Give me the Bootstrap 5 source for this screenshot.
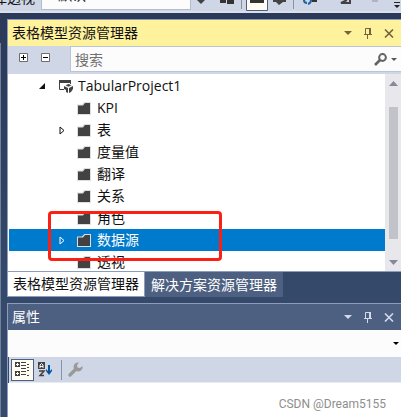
<!DOCTYPE html>
<html lang="zh-CN">
<head>
<meta charset="utf-8">
<meta name="viewport" content="width=device-width, initial-scale=1">
<title>表格模型资源管理器</title>
<link href="https://cdn.jsdelivr.net/npm/bootstrap@5.3.0/dist/css/bootstrap.min.css" rel="stylesheet">
<style>
  body { font: 14px/22px "Open Sans", "Noto Sans CJK SC", sans-serif; color: #111; background: linear-gradient(#2a3957 0, #2f4262 180px, #354a6b 300px); }
  button { color: inherit; background: none; border: 0; padding: 0; line-height: 1; }
  svg { display: block; flex: none; }
  .strip { height: 13px; background: #cfd6e5; border-bottom: 2px solid #dce0ec; }
  .strip-row { height: 32px; margin-top: -19px; }
  .strip-label { width: 41px; padding: 0 6px 4px 0; }
  .strip-select { width: 150px; height: 30px; margin-bottom: 3px; padding: 0 8px; font-size: 14px; line-height: 28px; color: #111; background: #fcfcfc; border: 1px solid #b4bdcc; border-radius: 0; appearance: none; }
  .dock { min-height: 100vh; }
  .docked { padding-top: 6px; }
  .edge { width: 7px; border-left: 1px solid #71809b; margin-top: 24px; }
  .pane { border: solid #8e9bbc; border-width: 1px 0 1px 1px; }
  .pane-title { height: 26px; padding: 0 7px 0 4px; }
  .pane-title h2 { font-size: 14px; line-height: 22px; font-weight: 400; }
  .tools { gap: 12px; }
  .active-title { background: #fff29d; }
  .active-title .tools { color: #75633d; }
  .quiet-title { background: #4d6082; color: #fff; }
  .quiet-title .tools { color: #d3daea; }
  .finder { height: 28px; background: #cfd6e5; padding-bottom: 2px; }
  .finder-btns { width: 62px; padding: 0 20px 3px 11px; }
  .finder-box { border: solid #b9c4d6; border-width: 1px 0 1px 1px; background: #fcfcfc; }
  .finder-box input { height: 24px; padding: 1px 4px; font-size: 14px; min-width: 0; outline: 0; }
  .finder-box input::placeholder { color: #717171; opacity: 1; }
  .tree { height: 197px; padding-top: 1px; background: #fff; }
  .tree-row { height: 22px; margin-left: 1px; white-space: nowrap; }
  .twisty { width: 14px; height: 22px; }
  .root { padding-left: 26px; }
  .leaf { padding-left: 46px; }
  .leaf-icon { margin: 0 6px 0 8px; }
  .picked { background: #007acc; color: #fff; }
  .scroller { width: 16px; background: #e8e8ec; padding: 7px 3px 6px 4px; }
  .thumb { background: #c2c3c9; margin: 21px 0; }
  .callout { left: 40px; top: 137px; width: 174px; height: 50px; border: 3px solid #fb2014; border-radius: 4px; pointer-events: none; }
  .tab-a, .tab-b { height: 25px; font-size: 14px; line-height: 22px; white-space: nowrap; }
  .tab-a { background: #fff; color: #111; padding: 0 5px 1px; border: solid #8e9bbc; border-width: 0 1px 1px; }
  .tab-b { background: #4d6082; color: #fff; padding: 2px 6px 1px; }
  .tabs { margin-bottom: 6px; }
  .object-bar { height: 27px; background: #fcfcfc; }
  .object-bar select { height: 27px; appearance: none; border: 0; background: transparent; }
  .caret { right: 2px; top: 12px; }
  .prop-tools { height: 26px; margin-left: 1px; padding: 0 2px; background: #cfd6e5; border-bottom: 1px solid #e8ebf2; }
  .tool-on { width: 23px; height: 22px; border: 1px solid #4d6082; background: #fffcf4; }
  .tool-rule { width: 1px; height: 20px; background: #8591a8; margin: 0 6px 0 8px; }
  .props { background: #fff; padding: 0 15px 3px; }
  .byline { font: 12px/20px Roboto, sans-serif; color: #8e8e8e; }
</style>
</head>
<body>
<svg class="d-none" aria-hidden="true">
  <symbol id="folder" viewBox="0 0 14 13"><path d="M0 2.5h5L7.2 0H14v13H0z" fill="#dedede"/><path d="M1 3.5h5L8 1h5v11H1z" fill="#424242"/></symbol>
  <symbol id="down" viewBox="0 0 8 4"><path d="M0 0h8L4 4z" fill="currentColor"/></symbol>
  <symbol id="pin" viewBox="0 0 8 12"><path d="M1.500 7V1.500h4V7" fill="none" stroke="currentColor"/><path d="M5 1h2v6H5zM0 7h8v1H0zM3 8h1v4H3z" fill="currentColor"/></symbol>
  <symbol id="cross" viewBox="0 0 10 9"><path d="M1 .5l8 8M9 .5l-8 8" fill="none" stroke="currentColor" stroke-width="1.6"/></symbol>
  <symbol id="closed" viewBox="0 0 6 9"><path d="M1 1l4 3.5L1 8z" fill="none" stroke="currentColor"/></symbol>
</svg>

<div class="dock d-flex flex-column">
  <div class="strip overflow-hidden">
    <div class="strip-row d-flex align-items-end">
      <label for="persp" class="strip-label flex-shrink-0 overflow-hidden text-nowrap d-flex justify-content-end">库透视</label>
      <select id="persp" class="strip-select flex-shrink-0"><option>&lt;默认&gt;</option></select>
      <svg width="210" height="13" viewBox="0 0 210 13">
        <path d="M6 0h8l-4 4z" fill="#424242"/>
        <path d="M29 0h6v3h-6zM36 0h7v4h-7z" fill="#333"/>
        <path d="M50.500 0v9M102.500 0v9" stroke="#8591a8"/>
        <path d="M55.500-1v11.500h21V-1" fill="#fffcf4" stroke="#4d6082"/>
        <path d="M59 0h14v3H59z" fill="#333"/>
        <path d="M82 0h13v2h-3l-4 3-3-3h-3z" fill="#444"/>
        <path d="M113 0q0 3 3 3M117 4q3-1 3-4" fill="none" stroke="#1d63a5" stroke-width="2"/><path d="M121 1h5" stroke="#333" stroke-width="2"/>
        <path d="M156 0l-6 3h9V0" fill="none" stroke="#424242" stroke-width="2"/>
        <path d="M181 0h6v2h-6z" fill="#aeb4c1"/>
        <path d="M203 2h6v1h-6zM203 5h6l-3 3z" fill="#222"/>
      </svg>
    </div>
  </div>

  <div class="docked d-flex flex-grow-1">
    <div class="edge flex-shrink-0"></div>
    <main class="flex-grow-1 d-flex flex-column overflow-hidden">
      <section>
        <div class="pane">
          <header class="pane-title active-title d-flex align-items-center">
            <h2 class="m-0 me-auto">表格模型资源管理器</h2>
            <div class="tools d-flex align-items-center">
              <button aria-label="窗口位置"><svg width="8" height="4"><use href="#down"/></svg></button>
              <button aria-label="自动隐藏"><svg width="8" height="12"><use href="#pin"/></svg></button>
              <button aria-label="关闭"><svg width="10" height="9"><use href="#cross"/></svg></button>
            </div>
          </header>
          <div class="finder d-flex">
            <div class="finder-btns d-flex align-items-center justify-content-between flex-shrink-0">
              <button aria-label="全部展开"><svg width="9" height="9"><path d="M.5.5h8v8h-8z" fill="#fff" stroke="#6d6d6d"/><path d="M2 4.500h5M4.500 2v5" stroke="#000"/></svg></button>
              <button aria-label="全部折叠"><svg width="9" height="9"><path d="M.5.5h8v8h-8z" fill="#fff" stroke="#6d6d6d"/><path d="M2 4.500h5" stroke="#000"/></svg></button>
            </div>
            <div class="finder-box d-flex align-items-center flex-grow-1">
              <input class="flex-grow-1 border-0 bg-transparent" type="text" placeholder="搜索" aria-label="搜索">
              <button aria-label="开始搜索"><svg width="13" height="13"><circle cx="8.500" cy="4.500" r="3.400" fill="none" stroke="#636363" stroke-width="2"/><path d="M6 7l-5 5" stroke="#636363" stroke-width="2.600"/></svg></button>
              <button class="ms-1 me-1" aria-label="搜索选项"><svg width="6" height="3" viewBox="0 0 8 4" color="#555"><use href="#down"/></svg></button>
            </div>
          </div>
          <div class="d-flex position-relative bg-white">
            <ul class="tree list-unstyled m-0 flex-grow-1 overflow-hidden" role="tree">
              <li class="tree-row root d-flex align-items-center"><button class="twisty" aria-label="折叠"><svg class="mx-1" width="6" height="6"><path d="M6 0v6H0z" fill="#111"/></svg></button>
                <svg class="ms-2 me-1" width="17" height="15"><path d="M2 1h12v3H2z" fill="#424242"/><path d="M2.500 1v9.500H7M13.500 3v2" fill="none" stroke="#424242"/><path d="M11.500 5l3 1.200-3 1.500-3-1.500z" fill="#424242"/><path d="M7 7l4 2v5l-2-1v-2l-2-1zM16 7l-4 2v5l2-1 2-3z" fill="#424242"/></svg>
                <span>TabularProject1</span></li>
              <li class="tree-row leaf d-flex align-items-center"><span class="twisty"></span><svg class="leaf-icon" width="14" height="13"><use href="#folder"/></svg>KPI</li>
              <li class="tree-row leaf d-flex align-items-center"><button class="twisty" aria-label="展开"><svg class="mx-1" width="6" height="9"><use href="#closed"/></svg></button><svg class="leaf-icon" width="14" height="13"><use href="#folder"/></svg>表</li>
              <li class="tree-row leaf d-flex align-items-center"><span class="twisty"></span><svg class="leaf-icon" width="14" height="13"><use href="#folder"/></svg>度量值</li>
              <li class="tree-row leaf d-flex align-items-center"><span class="twisty"></span><svg class="leaf-icon" width="14" height="13"><use href="#folder"/></svg>翻译</li>
              <li class="tree-row leaf d-flex align-items-center"><span class="twisty"></span><svg class="leaf-icon" width="14" height="13"><use href="#folder"/></svg>关系</li>
              <li class="tree-row leaf d-flex align-items-center"><span class="twisty"></span><svg class="leaf-icon" width="14" height="13"><use href="#folder"/></svg>角色</li>
              <li class="tree-row leaf picked d-flex align-items-center" aria-selected="true"><button class="twisty" aria-label="展开"><svg class="mx-1" width="6" height="9"><use href="#closed"/></svg></button><svg class="leaf-icon" width="14" height="13"><use href="#folder"/></svg>数据源</li>
              <li class="tree-row leaf d-flex align-items-center"><span class="twisty"></span><svg class="leaf-icon" width="14" height="13"><use href="#folder"/></svg>透视</li>
            </ul>
            <div class="scroller d-flex flex-column flex-shrink-0" aria-hidden="true">
              <svg width="9" height="5"><path d="M0 5h9L4.500 0z" fill="#868999"/></svg>
              <div class="thumb flex-grow-1"></div>
              <svg width="9" height="5"><path d="M0 0h9L4.500 5z" fill="#868999"/></svg>
            </div>
            <div class="callout position-absolute"></div>
          </div>
        </div>
        <div class="tabs d-flex" role="tablist">
          <button class="tab-a" role="tab" aria-selected="true">表格模型资源管理器</button>
          <button class="tab-b" role="tab" aria-selected="false">解决方案资源管理器</button>
        </div>
      </section>

      <section class="pane border-bottom-0 flex-grow-1 d-flex flex-column">
        <header class="pane-title quiet-title d-flex align-items-center">
          <h2 class="m-0 me-auto">属性</h2>
          <div class="tools d-flex align-items-center">
            <button aria-label="窗口位置"><svg width="8" height="4"><use href="#down"/></svg></button>
            <button aria-label="自动隐藏"><svg width="8" height="12"><use href="#pin"/></svg></button>
            <button aria-label="关闭"><svg width="10" height="9"><use href="#cross"/></svg></button>
          </div>
        </header>
        <div class="object-bar position-relative">
          <select class="w-100" aria-label="对象"><option></option></select>
          <svg class="caret position-absolute" width="6" height="3" viewBox="0 0 6 3"><path d="M0 0h6L3 3z" fill="#000"/></svg>
        </div>
        <div class="prop-tools d-flex align-items-center">
          <button class="tool-on" aria-label="按分类顺序"><svg class="mx-auto" width="15" height="15"><path d="M0 0h5v5H0zM0 9h5v5H0z" fill="#424242"/><path d="M1 2.500h3M2.500 1v3M1 11.500h3M2.500 10v3" stroke="#fff"/><path d="M6 .5h5M6 3.500h5M6 6.500h5M6 9.500h5M6 12.500h5M12 2.500h2M12 5.500h2M12 8.500h2M12 13.500h2" stroke="#424242"/></svg></button>
          <button class="ms-1" aria-label="字母顺序"><svg width="15" height="15"><path d="M0 0h7v7H0z" fill="#424242"/><path d="M2 6V3l1.500-1.500L5 3v3M2 4.500h3" fill="none" stroke="#fff"/><path d="M1 9h5l-4 4.500h4" fill="none" stroke="#424242" stroke-width="1.500"/><path d="M11 3v7" stroke="#00539c" stroke-width="2"/><path d="M8 7l3 3 3-3v2l-3 4-3-4z" fill="#00539c"/></svg></button>
          <span class="tool-rule"></span>
          <button disabled aria-label="属性页"><svg width="15" height="15"><path d="M2 13L8 7" stroke="#999" stroke-width="3.200" stroke-linecap="round"/><path d="M11 .5a4.500 4.500 0 1 0 3.500 3.500L12 6 9.500 5.500 9 3z" fill="#999"/></svg></button>
        </div>
        <div class="props flex-grow-1 d-flex align-items-end justify-content-end"><span class="byline">CSDN @Dream5155</span></div>
      </section>
    </main>
  </div>
</div>
<script src="https://cdn.jsdelivr.net/npm/bootstrap@5.3.0/dist/js/bootstrap.bundle.min.js"></script>
</body>
</html>
